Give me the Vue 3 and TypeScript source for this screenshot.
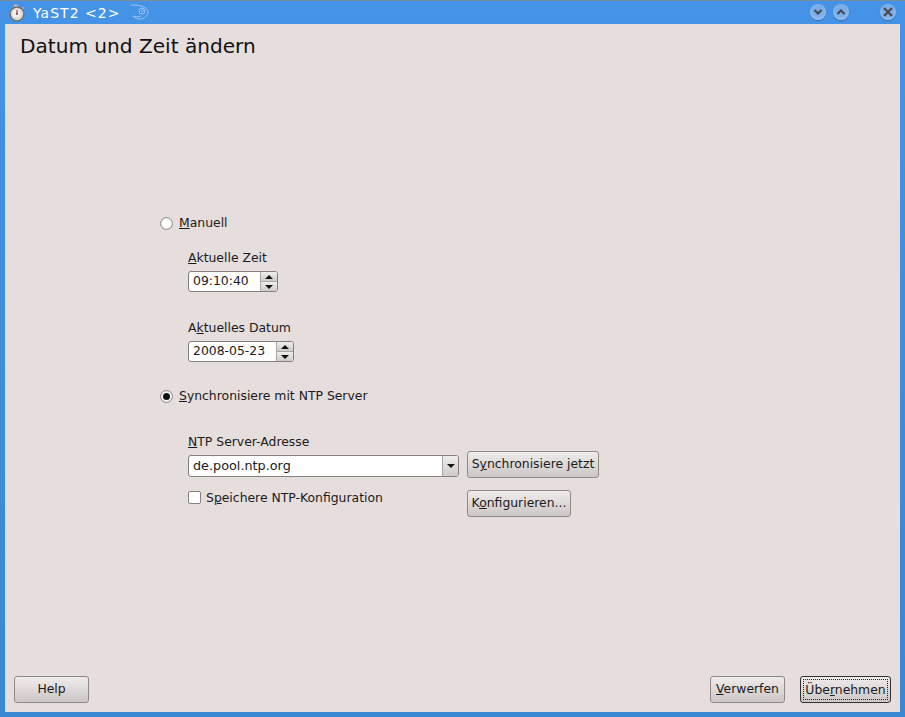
<script setup lang="ts">
</script>

<template>
  <div class="window">
    <header class="titlebar">
      <svg class="app-icon" width="18" height="18" viewBox="0 0 18 18">
        <rect x="6" y="0.500" width="4" height="3" fill="#b8b4af" transform="rotate(12 8 2)" />
        <circle cx="9" cy="10" r="7.500" fill="#6f6b67" />
        <circle cx="9" cy="10" r="6.200" fill="#dcd9d5" />
        <circle cx="8.500" cy="9.500" r="4" fill="#f2f0ed" />
        <path d="M9 10V6" stroke="#a83030" stroke-width="1.200" />
        <circle cx="9" cy="10" r="1" fill="#555" />
        <path d="M14 3L16 5" stroke="#a9a5a0" stroke-width="1.500" />
      </svg>
      <span class="win-title">YaST2 &lt;2&gt;</span>
      <svg class="gecko" width="20" height="16" viewBox="0 0 20 16" fill="none" stroke="#9cc4ee" stroke-width="1">
        <path d="M1 1C4 1 8 1 11 2C15 3 18 5 18 8C18 12 14 15 10 15C7 15 5 14 3 12C6 13 9 13 11 12" />
        <circle cx="12" cy="7" r="3" />
        <circle cx="12.500" cy="6.500" r="1" />
      </svg>
      <span class="spacer"></span>
      <button class="win-btn"><svg width="10" height="8" viewBox="0 0 10 8"><path d="M1.500 2L5 5.500L8.500 2" fill="none" stroke="#3c4650" stroke-width="2" /></svg></button>
      <button class="win-btn up"><svg width="10" height="8" viewBox="0 0 10 8"><path d="M1.500 6L5 2.500L8.500 6" fill="none" stroke="#3c4650" stroke-width="2" /></svg></button>
      <button class="win-btn close"><svg width="10" height="10" viewBox="0 0 10 10"><path d="M1 1L9 9M9 1L1 9" fill="none" stroke="#4a4a4a" stroke-width="2.200" /></svg></button>
    </header>

    <main class="content">
      <h1 class="heading">Datum und Zeit ändern</h1>

      <div class="form">
        <label class="radio-row">
          <span class="radio"></span>
          <span><u>M</u>anuell</span>
        </label>

        <div class="indent manual">
          <div class="label"><u>A</u>ktuelle Zeit</div>
          <div class="spin time">
            <span class="spin-value">09:10:40</span>
            <span class="spin-arrows">
              <span class="arrow-cell"><i class="tri-up"></i></span>
              <span class="arrow-cell"><i class="tri-down"></i></span>
            </span>
          </div>
          <div class="label date-label">A<u>k</u>tuelles Datum</div>
          <div class="spin date">
            <span class="spin-value">2008-05-23</span>
            <span class="spin-arrows">
              <span class="arrow-cell"><i class="tri-up"></i></span>
              <span class="arrow-cell"><i class="tri-down"></i></span>
            </span>
          </div>
        </div>

        <label class="radio-row ntp-radio">
          <span class="radio checked"></span>
          <span><u>S</u>ynchronisiere mit NTP Server</span>
        </label>

        <div class="indent ntp">
          <div class="label"><u>N</u>TP Server-Adresse</div>
          <div class="ntp-grid">
            <div class="combo">
              <span class="combo-value">de.pool.ntp.org</span>
              <span class="combo-arrow"><i class="tri-down"></i></span>
            </div>
            <button class="btn sync">S<u>y</u>nchronisiere jetzt</button>
            <label class="check-row">
              <span class="check"></span>
              <span>S<u>p</u>eichere NTP-Konfiguration</span>
            </label>
            <button class="btn config">K<u>o</u>nfigurieren...</button>
          </div>
        </div>
      </div>

      <footer class="actions">
        <button class="btn help">Help</button>
        <span class="spacer"></span>
        <button class="btn discard"><u>V</u>erwerfen</button>
        <button class="btn apply"><span class="focus">Übe<u>r</u>nehmen</span></button>
      </footer>
    </main>
  </div>
</template>

<style>
html, body { margin: 0; background: #3f8ee0; }
</style>

<style scoped>
.window {
  width: 905px;
  height: 717px;
  box-sizing: border-box;
  display: flex;
  flex-direction: column;
  padding: 0 5px 5px;
  background: linear-gradient(#4593e6, #3a87d4);
  border-top: 1px solid #7b8a99;
  font-family: "DejaVu Sans", sans-serif;
  font-size: 12.4px;
  color: #1b1b1b;
  overflow: hidden;
}
.titlebar {
  height: 23px;
  flex: none;
  display: flex;
  align-items: center;
  color: #fff;
  padding-left: 3px;
}
.app-icon { margin-right: 7px; }
.win-title { font-size: 14px; font-weight: 500; letter-spacing: 1px; }
.gecko { margin-left: 10px; margin-top: -2px; }
.spacer { flex: 1; }
.win-btn {
  width: 16px;
  height: 16px;
  margin: -1px 0 0 7px;
  padding: 0;
  border: none;
  border-radius: 50%;
  background: radial-gradient(circle at 50% 42%, #7bade8 45%, #b7d1f2 100%);
  box-shadow: 0 1px 1px #2f6fb4;
  display: flex;
  align-items: center;
  justify-content: center;
}
.win-btn.close { margin: -1px 4px 0 31px; }
.content {
  flex: 1;
  display: flex;
  flex-direction: column;
  background: #e6dddd;
  box-sizing: border-box;
  padding: 0 9px 9px 8px;
  border-left: 1px solid #d4e2f0;
}
.heading {
  margin: 11px 0 0 6px;
  font-size: 20.1px;
  line-height: 22px;
  font-weight: 400;
  color: #111;
}
.form {
  margin: 157px 0 0 146px;
  flex: 1;
}
.radio-row {
  display: flex;
  align-items: center;
  height: 17px;
}
.radio {
  width: 11px;
  height: 11px;
  margin: 1px 6px 0 0;
  border: 1px solid #8d8a88;
  border-radius: 50%;
  background: #fff;
  box-shadow: inset 0 0 2px #bbb;
  position: relative;
}
.radio.checked::after {
  content: "";
  position: absolute;
  left: 2px;
  top: 2px;
  width: 7px;
  height: 7px;
  border-radius: 50%;
  background: #111;
}
.indent { margin-left: 28px; }
.manual { margin-top: 18px; }
.label { height: 17px; line-height: 17px; }
.spin {
  margin-top: 5px;
  height: 21px;
  box-sizing: border-box;
  display: flex;
  border: 1px solid #85807e;
  border-radius: 3px;
  background: #fff;
  overflow: hidden;
}
.spin.time { width: 90px; }
.spin.date { width: 106px; }
.spin-value { flex: 1; padding-left: 4px; line-height: 18px; }
.spin-arrows {
  width: 16px;
  display: flex;
  flex-direction: column;
  border-left: 1px solid #a9a5a3;
}
.arrow-cell {
  flex: 1;
  display: flex;
  align-items: center;
  justify-content: center;
  background: linear-gradient(#f0eded, #cfcbca);
}
.arrow-cell + .arrow-cell { border-top: 1px solid #a9a5a3; }
.tri-up, .tri-down {
  display: block;
  width: 0;
  height: 0;
  border-left: 4px solid transparent;
  border-right: 4px solid transparent;
}
.tri-up { border-bottom: 4px solid #111; }
.tri-down { border-top: 4px solid #111; }
.date-label { margin-top: 27px; }
.ntp-radio { margin-top: 25px; }
.ntp { margin-top: 29px; }
.ntp-grid {
  margin-top: 1px;
  display: grid;
  grid-template-columns: 271px auto;
  column-gap: 8px;
  row-gap: 12px;
  justify-items: start;
  align-items: start;
}
.combo {
  width: 271px;
  height: 22px;
  box-sizing: border-box;
  display: flex;
  border: 1px solid #85807e;
  border-radius: 3px;
  background: #fff;
  overflow: hidden;
  margin-top: 4px;
}
.combo-value { flex: 1; padding-left: 4px; line-height: 19px; font-size: 12.8px; }
.combo-arrow {
  width: 15px;
  display: flex;
  align-items: center;
  justify-content: center;
  border-left: 1px solid #a9a5a3;
  background: linear-gradient(#f0eded, #cfcbca);
}
.check-row { display: flex; align-items: center; height: 17px; margin-top: -1px; }
.check {
  width: 11px;
  height: 11px;
  margin-right: 5px;
  border: 1px solid #85807e;
  border-radius: 2px;
  background: #fff;
}
.btn {
  height: 27px;
  box-sizing: border-box;
  padding: 0 0 2px;
  border: 1px solid #8f8a88;
  border-radius: 3px;
  background: linear-gradient(#efecec, #cbc7c6);
  font: inherit;
  color: inherit;
  text-align: center;
}
.sync { width: 132px; }
.config { width: 104px; }
.actions { display: flex; height: 27px; flex: none; }
.help { width: 75px; }
.discard { width: 75px; margin-right: 15px; }
.apply { width: 91px; border-color: #333; padding: 2px; }
.focus {
  display: block;
  height: 100%;
  line-height: 19px;
  border: 1px dotted #222;
  box-sizing: border-box;
  white-space: nowrap;
}
</style>
